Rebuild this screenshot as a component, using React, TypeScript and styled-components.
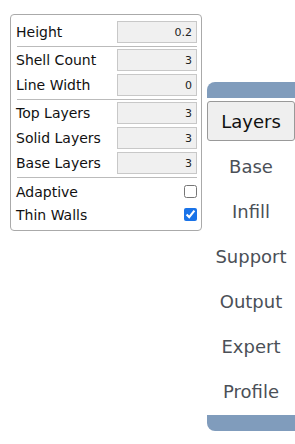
import styled, { createGlobalStyle } from "styled-components";

const GlobalStyle = createGlobalStyle`
  html, body {
    margin: 0;
    padding: 0;
    overflow: hidden;
    background: #fff;
    font-family: "DejaVu Sans", Verdana, sans-serif;
  }
`;

type Field = { label: string; value: string } | "sep";

const FIELDS: Field[] = [
  { label: "Height", value: "0.2" },
  "sep",
  { label: "Shell Count", value: "3" },
  { label: "Line Width", value: "0" },
  "sep",
  { label: "Top Layers", value: "3" },
  { label: "Solid Layers", value: "3" },
  { label: "Base Layers", value: "3" },
  "sep",
];

const CHECKS = [
  { label: "Adaptive", checked: false },
  { label: "Thin Walls", checked: true },
];

const MENU = ["Layers", "Base", "Infill", "Support", "Output", "Expert", "Profile"];

export default function App() {
  return (
    <Page>
      <GlobalStyle />
      <Panel>
        {FIELDS.map((f, i) =>
          f === "sep" ? (
            <Separator key={i} />
          ) : (
            <Row key={i}>
              <Label>{f.label}</Label>
              <ValueInput readOnly value={f.value} />
            </Row>
          )
        )}
        {CHECKS.map((c) => (
          <CheckRow key={c.label}>
            <Label>{c.label}</Label>
            <Check type="checkbox" readOnly checked={c.checked} />
          </CheckRow>
        ))}
      </Panel>
      <Menu>
        <MenuCap $top />
        {MENU.map((m, i) => (
          <MenuItem key={m} $active={i === 0}>
            {m}
          </MenuItem>
        ))}
        <MenuCap />
      </Menu>
    </Page>
  );
}

const Page = styled.div`
  display: flex;
  align-items: flex-start;
  gap: 5px;
  padding: 14px 0 0 10px;
`;

const Panel = styled.div`
  display: flex;
  flex-direction: column;
  width: 181px;
  flex-shrink: 0;
  padding: 6px 4px 4px 5px;
  border: 1px solid #aaa;
  border-radius: 4px;
`;

const Row = styled.div`
  display: flex;
  align-items: center;
  justify-content: space-between;
  height: 22px;
  & + & {
    margin-top: 3px;
  }
`;

const Label = styled.span`
  font-size: 14px;
  color: #111;
  white-space: nowrap;
`;

const ValueInput = styled.input`
  box-sizing: border-box;
  width: 80px;
  height: 22px;
  margin: 0;
  padding: 0 4px 0 0;
  border: 1px solid #c8c8c8;
  background: #f0f0f0;
  text-align: right;
  font-family: "DejaVu Sans", sans-serif;
  font-size: 11px;
  color: #222;
  outline: none;
`;

const Separator = styled.div`
  height: 1px;
  margin: 3px 0 2px 1px;
  background: #bbb;
`;

const CheckRow = styled.div`
  display: flex;
  align-items: center;
  justify-content: space-between;
  height: 23px;
`;

const Check = styled.input`
  width: 13px;
  height: 13px;
  margin: 0;
  accent-color: #1a73e8;
`;

const Menu = styled.div`
  display: flex;
  flex-direction: column;
  align-items: stretch;
  gap: 5px;
  width: 88px;
  margin-top: 68px;
  flex-shrink: 0;
`;

const MenuCap = styled.div<{ $top?: boolean }>`
  height: 16px;
  background: #809cbc;
  border-radius: ${({ $top }) => ($top ? "8px 0 0 0" : "0 0 0 8px")};
  margin: ${({ $top }) => ($top ? "0 0 -2px" : "-1px 0 0")};
`;

const MenuItem = styled.div<{ $active?: boolean }>`
  box-sizing: border-box;
  height: 40px;
  display: flex;
  align-items: center;
  justify-content: center;
  font-size: 18px;
  color: ${({ $active }) => ($active ? "#111" : "#4b5057")};
  background: ${({ $active }) => ($active ? "#efefef" : "transparent")};
  border: 1px solid ${({ $active }) => ($active ? "#999" : "transparent")};
  border-radius: 3px;
`;
